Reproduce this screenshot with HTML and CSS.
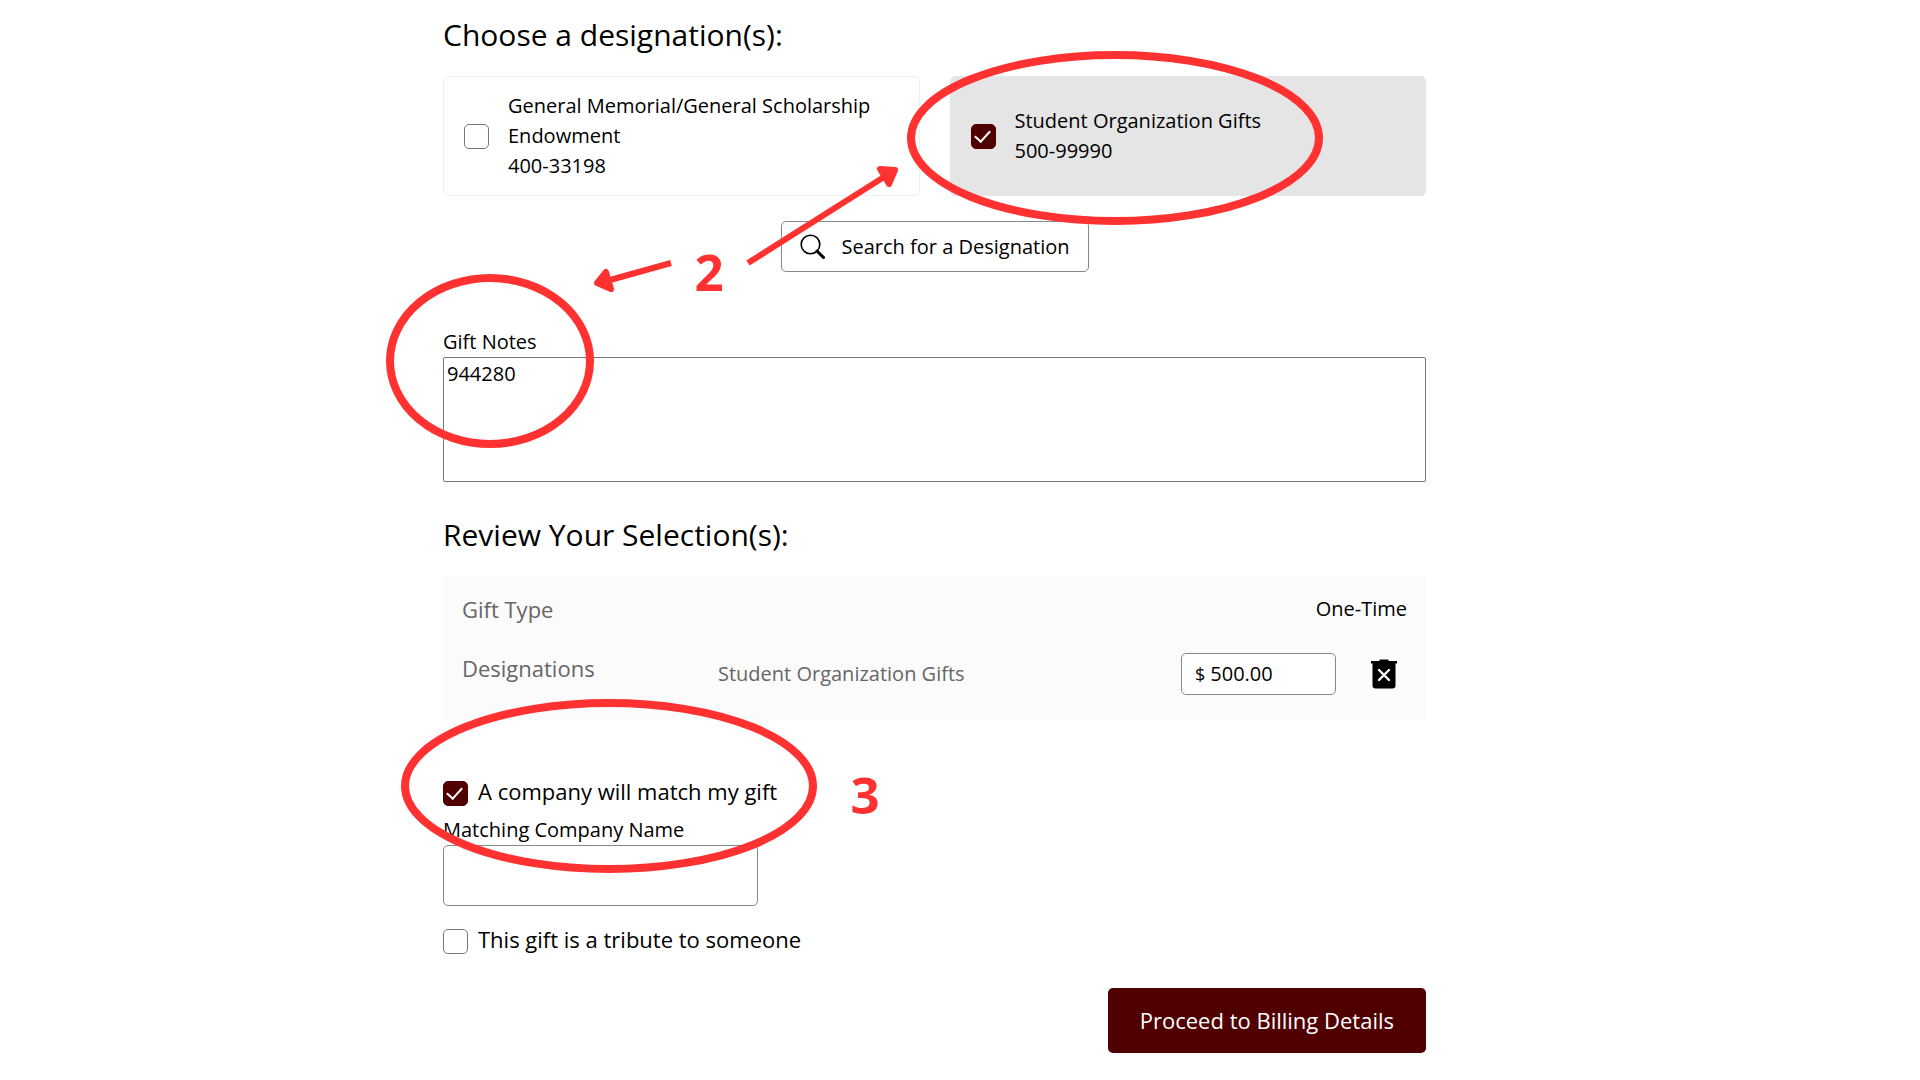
FILE: index.html
```html
<!DOCTYPE html>
<html lang="en">
<head>
    <meta charset="UTF-8">
    <meta name="viewport" content="width=device-width, initial-scale=1.0">
    <title>Make a Gift</title>
    <link rel="stylesheet" href="styles.css">
</head>
<body>
    <main class="page">
        <form class="giftForm">
            <h2>Choose a designation(s):</h2>
            <div class="cards">
                <label class="card">
                    <input type="checkbox" class="check">
                    <span>General Memorial/General Scholarship Endowment<br>400-33198</span>
                </label>
                <label class="card selected">
                    <input type="checkbox" class="check" checked>
                    <span>Student Organization Gifts<br>500-99990</span>
                </label>
            </div>
            <button type="button" class="searchButton">
                <svg width="25" height="25" viewBox="0 0 25 25" aria-hidden="true">
                    <circle cx="10.5" cy="10.5" r="9.3" fill="none" stroke="black" stroke-width="1.6"/>
                    <path d="M 17 17 L 23.5 23.5" stroke="black" stroke-width="3" stroke-linecap="round"/>
                </svg>
                Search for a Designation
            </button>

            <label class="fieldLabel notesLabel" for="notes">Gift Notes</label>
            <textarea id="notes" class="notes">944280</textarea>

            <h2 class="reviewTitle">Review Your Selection(s):</h2>
            <section class="review">
                <div class="reviewRow">
                    <span class="reviewName">Gift Type</span>
                    <span class="giftType">One-Time</span>
                </div>
                <div class="reviewRow">
                    <span class="reviewName">Designations</span>
                    <span class="designation">Student Organization Gifts</span>
                    <label class="amount">
                        <span>$</span>
                        <input type="text" value="500.00" aria-label="Amount">
                    </label>
                    <button type="button" class="removeButton" aria-label="Remove designation">
                        <svg width="26" height="30" viewBox="0 0 26 30">
                            <path d="M 0 2 H 8 L 9 0.5 H 17 L 18 2 H 26 V 4.5 H 24.5 V 26.5 Q 24.5 29.5 21.5 29.5 H 4.5 Q 1.5 29.5 1.5 26.5 V 4.5 H 0 Z" fill="black"/>
                            <path d="M 8 11 L 18 21 M 18 11 L 8 21" stroke="white" stroke-width="2.4" stroke-linecap="round"/>
                        </svg>
                    </button>
                </div>
            </section>

            <label class="option matchOption">
                <input type="checkbox" class="check" checked>
                A company will match my gift
            </label>
            <label class="fieldLabel" for="company">Matching Company Name</label>
            <input type="text" id="company" class="company">
            <label class="option">
                <input type="checkbox" class="check">
                This gift is a tribute to someone
            </label>
            <button type="submit" class="proceedButton">Proceed to Billing Details</button>
        </form>

        <!-- step markers over the form -->
        <svg class="markers" width="983" height="1080">
            <g fill="none" stroke="#ff3131" stroke-width="8">
                <ellipse cx="672" cy="138" rx="204" ry="83"/>
                <ellipse cx="47" cy="361" rx="100" ry="83"/>
                <ellipse cx="166" cy="786" rx="204" ry="83"/>
                <path d="M 305 263 L 441 177" stroke-width="6"/>
                <path d="M 228 263 L 167 280" stroke-width="6"/>
            </g>
            <g fill="#ff3131" stroke="#ff3131" stroke-width="6" stroke-linejoin="round">
                <path d="M 437 169 L 452 170 L 446 184 Z"/>
                <path d="M 154 283 L 163 272 L 168 289 Z"/>
            </g>
            <g class="steps">
                <text x="266" y="291">2</text>
                <text x="422" y="814">3</text>
            </g>
        </svg>
    </main>
</body>
</html>
```
FILE: styles.css
```css
*{
    box-sizing: border-box;
}
body{
    margin: 0;
    padding-right: 51px;
    background-color: white;
    color: black;
    font-family: "Open Sans", "Noto Sans", sans-serif;
    font-size: 20px;
    line-height: 24px;
}
button, input, textarea{
    font: inherit;
    color: inherit;
}
h2{
    margin: 0 0 21px;
    font-size: 30px;
    font-weight: 400;
    line-height: 40px;
}
.page{
    position: relative;
    max-width: 983px;
    margin: 0 auto;
}
.giftForm{
    display: flex;
    flex-direction: column;
    padding: 15px 0 24px;
}
.cards{
    display: grid;
    grid-template-columns: 1fr 1fr;
    gap: 30px;
}
.card{
    display: flex;
    align-items: center;
    gap: 19px;
    min-height: 120px;
    padding: 14px 20px;
    border: 1px solid #efefef;
    border-radius: 5px;
    line-height: 30px;
}
.selected{
    background-color: #e5e5e5;
    border-color: #e5e5e5;
}
.check{
    appearance: none;
    display: grid;
    place-content: center;
    flex: none;
    width: 25px;
    height: 25px;
    margin: 0;
    border: 1px solid #777;
    border-radius: 5px;
    background-color: white;
}
.check:checked{
    background-color: #500000;
    border-color: #500000;
}
.check:checked::before{
    content: "";
    width: 7px;
    height: 13px;
    margin: 0 2px 4px 0;
    border: solid white;
    border-width: 0 2px 2px 0;
    transform: rotate(42deg);
}
.searchButton{
    display: flex;
    align-items: center;
    align-self: center;
    gap: 17px;
    margin-top: 25px;
    padding: 12px 18px;
    border: 1px solid #888;
    border-radius: 5px;
    background-color: white;
    line-height: 25px;
}
.fieldLabel{
    align-self: flex-start;
    margin: 12px 0 3px;
}
.notesLabel{
    margin-top: 58px;
}
.notes{
    height: 125px;
    padding: 4px 3px;
    border: 1px solid #777;
    border-radius: 2px;
    resize: none;
}
.reviewTitle{
    margin-top: 33px;
}
.review{
    display: flex;
    flex-direction: column;
    gap: 29px;
    padding: 18px 19px 25px;
    background-color: #fbfbfb;
    line-height: 30px;
}
.reviewRow{
    display: flex;
    align-items: center;
}
.reviewName{
    align-self: flex-start;
    width: 256px;
    color: #666;
    font-size: 22px;
}
.giftType{
    margin-left: auto;
}
.designation{
    flex: 1;
    color: #666;
}
.amount{
    display: flex;
    align-items: center;
    gap: 5px;
    width: 155px;
    height: 42px;
    padding: 0 13px;
    border: 1px solid #888;
    border-radius: 5px;
    background-color: white;
}
.amount span{
    font-size: 18px;
}
.amount input{
    width: 100%;
    min-width: 0;
    padding: 0;
    border: 0;
    background: none;
}
.removeButton{
    display: flex;
    justify-content: center;
    width: 46px;
    margin-left: 25px;
    padding: 0;
    border: 0;
    background: none;
}
.option{
    display: flex;
    align-items: flex-end;
    align-self: flex-start;
    gap: 10px;
    margin-top: 18px;
    font-size: 22px;
    line-height: 30px;
}
.matchOption{
    margin-top: 56px;
}
.company{
    width: 315px;
    height: 61px;
    padding: 0 12px;
    border: 1px solid #888;
    border-radius: 5px;
}
.proceedButton{
    align-self: flex-end;
    margin-top: 34px;
    padding: 16px 32px;
    border: 0;
    border-radius: 5px;
    background-color: #500000;
    color: white;
    font-size: 22px;
    line-height: 33px;
}
.markers{
    position: absolute;
    top: 0;
    left: 0;
    overflow: visible;
    pointer-events: none;
}
.steps{
    fill: #ff3131;
    font-size: 51px;
    font-weight: 700;
    text-anchor: middle;
}
```
